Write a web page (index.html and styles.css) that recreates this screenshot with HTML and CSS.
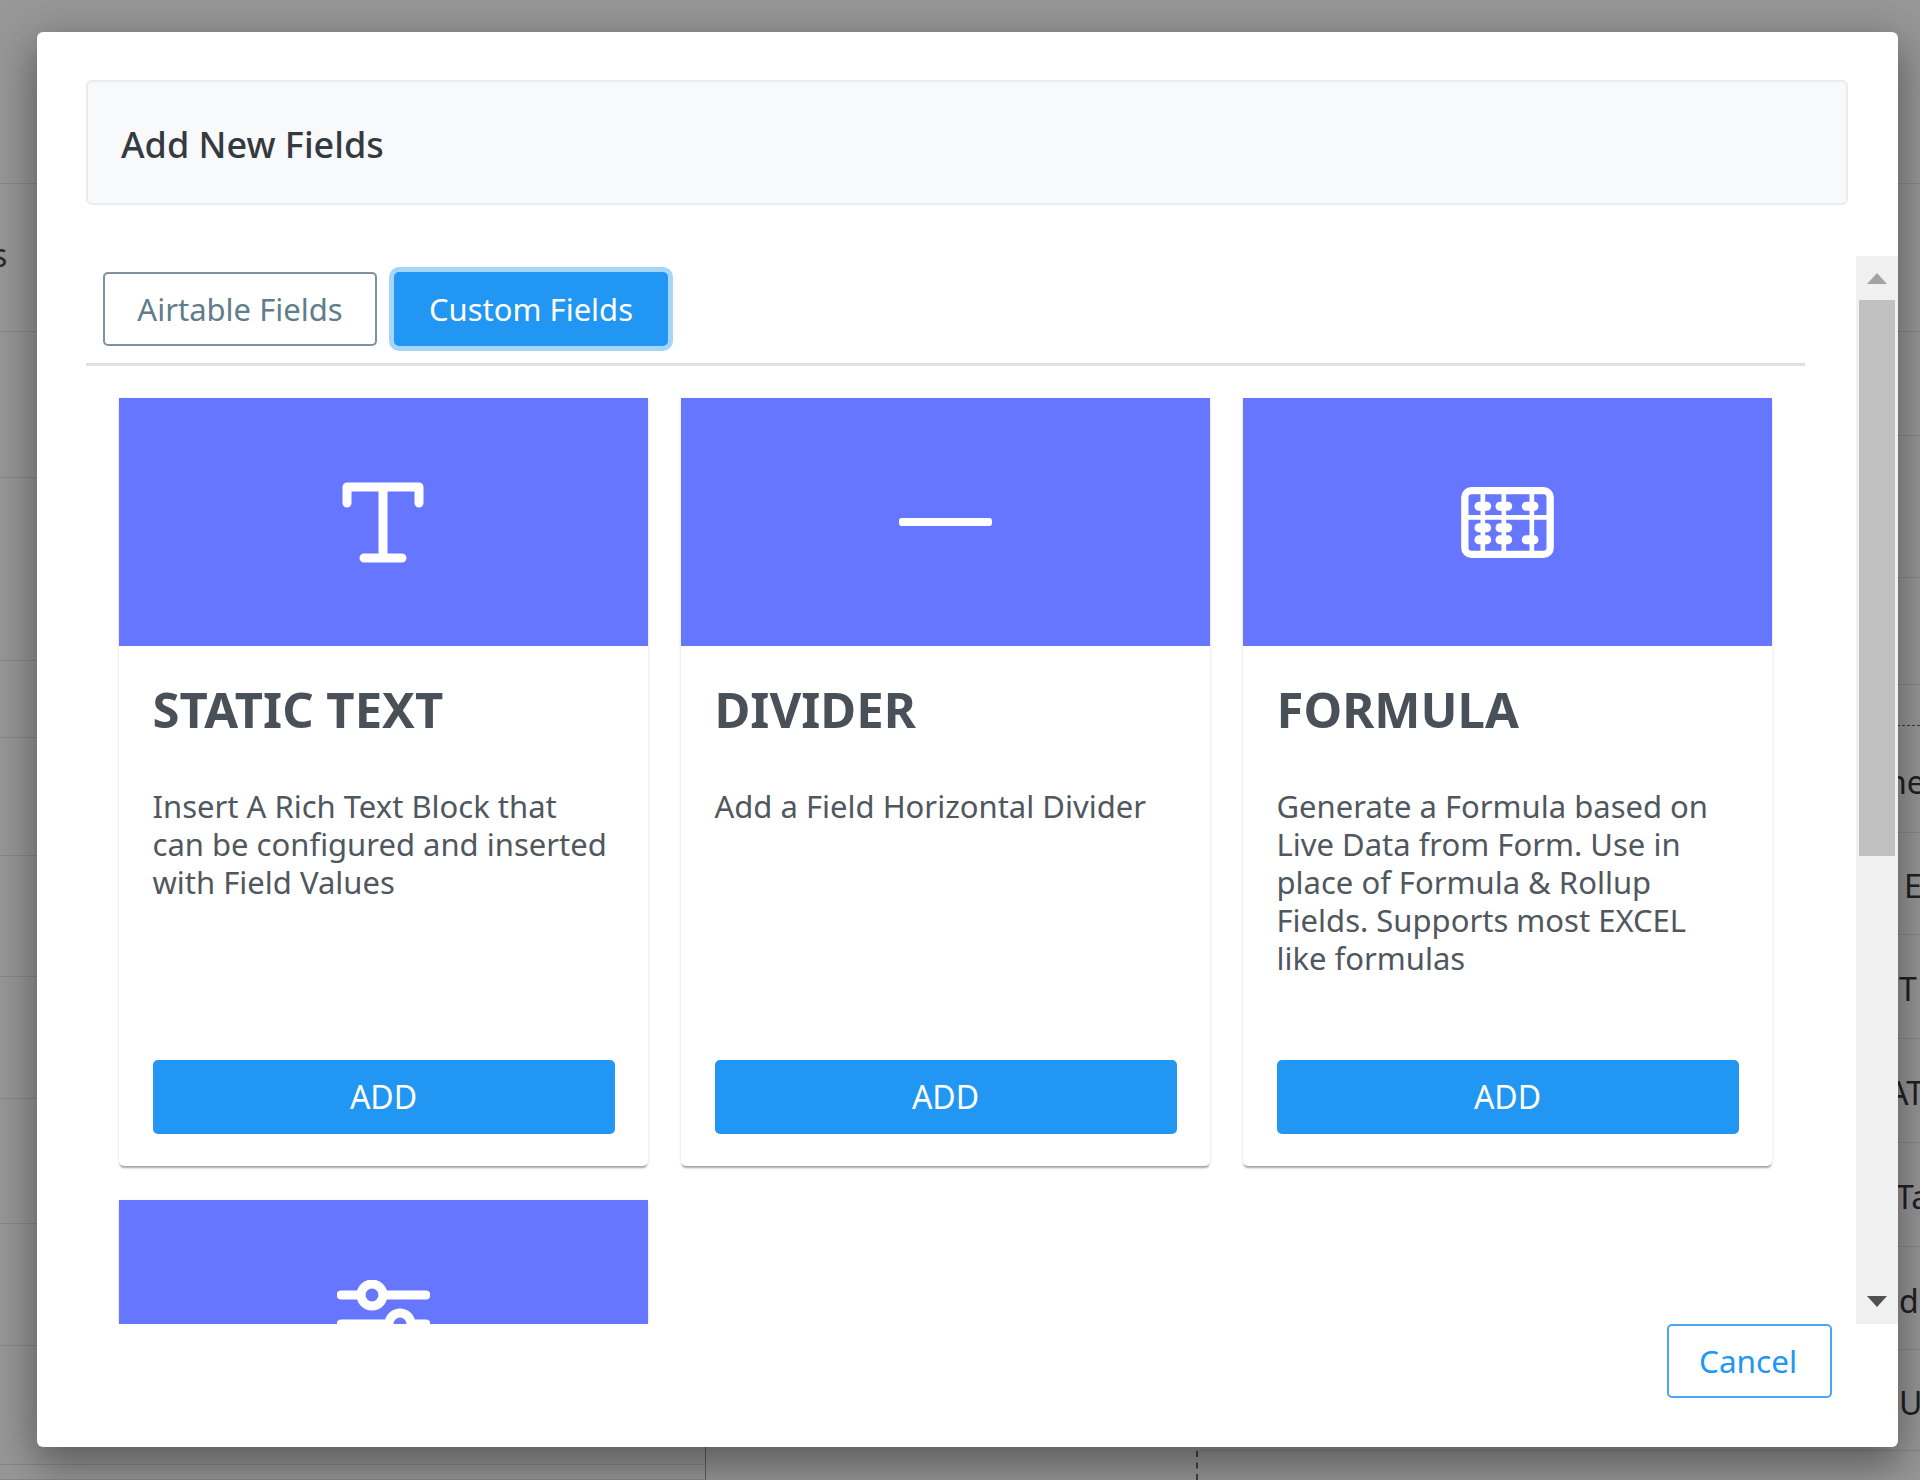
FILE: index.html
```html
<!DOCTYPE html>
<html lang="en">
<head>
    <meta charset="UTF-8">
    <title>Add New Fields</title>
    <link rel="stylesheet" href="styles.css">
</head>
<body>
    <!-- page behind the dialog -->
    <div class="page">
        <div class="col-left">
            <div class="row h184"></div>
            <div class="row h148"><span class="cut-left">s</span></div>
            <div class="row h146"></div>
            <div class="row h183"></div>
            <div class="row h77"></div>
            <div class="row h118"></div>
            <div class="row h121"></div>
            <div class="row h122"></div>
            <div class="row h125"></div>
            <div class="row h122"></div>
            <div class="row h119 edge"></div>
            <div class="row h15 edge"></div>
        </div>
        <div class="col-mid"></div>
        <div class="col-right">
            <div class="row h184"></div>
            <div class="row h148"></div>
            <div class="row h104"></div>
            <div class="row h142"></div>
            <div class="row h107"></div>
            <div class="row h41 dashed"></div>
            <div class="row h107"><span class="cell t-ne">ne</span></div>
            <div class="row h102"><span class="cell t-e">E</span></div>
            <div class="row h104"><span class="cell t-t">T</span></div>
            <div class="row h104"><span class="cell t-at">AT</span></div>
            <div class="row h104"><span class="cell t-ta">Ta</span></div>
            <div class="row h103"><span class="cell t-d">d</span></div>
            <div class="row h101"><span class="cell t-u">U</span></div>
            <div class="row h29 dash-left"></div>
        </div>
    </div>

    <div class="modal">
        <div class="modal-header"><h5>Add New Fields</h5></div>

        <div class="modal-body">
            <div class="scroll-content">
                <div class="tabs">
                    <button type="button" class="tab">Airtable Fields</button>
                    <button type="button" class="tab active">Custom Fields</button>
                </div>

                <div class="cards">
                    <div class="card">
                        <div class="card-head">
                            <svg class="icon" width="82" height="81" viewBox="0 0 82 81">
                                <path d="M5 21V5H77V21M41 5V76M22 76H60"/>
                            </svg>
                        </div>
                        <div class="card-body">
                            <h3>STATIC TEXT</h3>
                            <p>Insert A Rich Text Block that can be configured and inserted with Field Values</p>
                            <button type="button" class="add">ADD</button>
                        </div>
                    </div>

                    <div class="card">
                        <div class="card-head">
                            <svg class="icon" width="93" height="8" viewBox="0 0 93 8">
                                <path d="M4 4H89"/>
                            </svg>
                        </div>
                        <div class="card-body">
                            <h3>DIVIDER</h3>
                            <p>Add a Field Horizontal Divider</p>
                            <button type="button" class="add">ADD</button>
                        </div>
                    </div>

                    <div class="card">
                        <div class="card-head">
                            <svg class="icon abacus" width="93" height="71" viewBox="0 0 278 213">
                                <rect x="11" y="11" width="256" height="191" rx="20"/>
                                <path d="M65 10V203M128 10V203M212 10V203M10 91H268"/>
                                <g class="beads">
                                    <rect x="40" y="44" width="50" height="27" rx="13"/>
                                    <rect x="103" y="44" width="50" height="27" rx="13"/>
                                    <rect x="182" y="44" width="50" height="27" rx="13"/>
                                    <rect x="40" y="109" width="50" height="27" rx="13"/>
                                    <rect x="103" y="109" width="50" height="27" rx="13"/>
                                    <rect x="40" y="145" width="50" height="27" rx="13"/>
                                    <rect x="103" y="145" width="50" height="27" rx="13"/>
                                    <rect x="182" y="145" width="50" height="27" rx="13"/>
                                </g>
                            </svg>
                        </div>
                        <div class="card-body">
                            <h3>FORMULA</h3>
                            <p>Generate a Formula based on Live Data from Form. Use in place of Formula &amp; Rollup Fields. Supports most EXCEL like formulas</p>
                            <button type="button" class="add">ADD</button>
                        </div>
                    </div>

                    <div class="card">
                        <div class="card-head">
                            <svg class="icon" width="93" height="88" viewBox="0 0 93 88">
                                <path d="M4 15H24M46 15H89M4 44H52M74 44H89M4 73H14M36 73H89"/>
                                <circle cx="35" cy="15" r="11"/>
                                <circle cx="63" cy="44" r="11"/>
                                <circle cx="25" cy="73" r="11"/>
                            </svg>
                        </div>
                    </div>
                </div>
            </div>

            <div class="scrollbar">
                <div class="arrow up"></div>
                <div class="thumb"></div>
                <div class="arrow down"></div>
            </div>
        </div>

        <div class="modal-footer">
            <button type="button" class="cancel">Cancel</button>
        </div>
    </div>
</body>
</html>
```

FILE: styles.css
```css
* { box-sizing: border-box; }
html, body { margin: 0; height: 100%; }
body { font-family: "Noto Sans", "Open Sans", sans-serif; background: #989898; overflow: hidden; position: relative; }
button { font-family: inherit; cursor: pointer; }

/* page behind */
.page { display: flex; height: 1480px; }
.col-left { width: 706px; }
.col-mid { width: 490px; }
.col-right { flex: 1; overflow: hidden; }
.row { border-bottom: 1px solid rgba(0, 0, 0, .1); display: flex; align-items: center; white-space: nowrap; color: #1f2124; font-size: 32px; }
.h15 { height: 15px; } .h29 { height: 29px; } .h41 { height: 41px; } .h77 { height: 77px; } .h101 { height: 101px; } .h102 { height: 102px; }
.h103 { height: 103px; } .h104 { height: 104px; } .h107 { height: 107px; } .h118 { height: 118px; }
.h119 { height: 119px; } .h121 { height: 121px; } .h122 { height: 122px; } .h125 { height: 125px; }
.h142 { height: 142px; } .h146 { height: 146px; } .h148 { height: 148px; } .h183 { height: 183px; } .h184 { height: 184px; }
.dashed { border-bottom: 1px dashed #3c3c3c; }
.edge { border-right: 1px solid #5f5f5f; }
.dash-left { border-left: 2px dashed #444; border-bottom: 0; }
.cut-left { margin: -6px 0 0 -8px; font-size: 32px; color: #2b2d30; }
.cell { padding-top: 4px; }
.t-ne { padding-left: 691px; }
.t-e { padding-left: 708px; }
.t-t { padding-left: 703px; }
.t-at { padding-left: 692px; }
.t-ta { padding-left: 700px; }
.t-d { padding-left: 703px; }
.t-u { padding-left: 703px; }

/* dialog */
.modal { position: absolute; left: 37px; top: 32px; width: 1861px; height: 1415px; background: #fff; border-radius: 6px; padding-top: 48px;
    box-shadow: 0 12px 50px 4px rgba(0,0,0,.3), 0 20px 30px rgba(0,0,0,.14); }
.modal-header { margin: 0 50px 51px 49px; height: 125px; background: #f8f9fa; border: 2px solid #e9ecef; border-radius: 6px; display: flex; align-items: center; padding: 3px 0 0 33px; }
.modal-header h5 { margin: 0; font-size: 36px; font-weight: 500; color: #343a40; }

.modal-body { display: flex; height: 1068px; }
.scroll-content { flex: 1; overflow: hidden; padding: 16px 51px 0 49px; }
.tabs { display: flex; gap: 17px; padding: 0 0 17px 17px; border-bottom: 3px solid #dee2e6; }
.tab { width: 274px; height: 74px; font-size: 31px; color: #607d8b; background: #fff; border: 2px solid #7b939f; border-radius: 5px; padding: 0; }
.tab.active { color: #fff; background: #2196f3; border-color: #2196f3; box-shadow: 0 0 0 5px #a6d5fa; }

.cards { display: grid; grid-template-columns: repeat(3, 1fr); column-gap: 33px; row-gap: 34px; padding: 32px 33.5px 0 32.5px; }
.card { display: flex; flex-direction: column; height: 768px; background: #fff; border-radius: 0 0 5px 5px;
    box-shadow: 0 3px 2px -1px rgba(0,0,0,.3), 0 1px 3px 0 rgba(0,0,0,.12); }
.card-head { height: 248px; flex: none; background: #6776ff; display: flex; align-items: center; justify-content: center; }
.icon { fill: none; stroke: #fff; stroke-width: 9; stroke-linecap: round; stroke-linejoin: round; }
.abacus { stroke-width: 22; }
.abacus path { stroke-width: 14; stroke-linecap: butt; }
.beads rect { fill: #fff; stroke: none; }
.card-body { flex: 1; display: flex; flex-direction: column; padding: 33px 33px 32px 34px; }
.card-body h3 { margin: 0 0 48px; font-size: 49px; line-height: 60px; font-weight: 700; color: #495057; }
.card-body p { margin: 0; flex: 1; font-size: 31px; line-height: 38px; color: #50575e; }
.add { height: 74px; font-size: 32px; color: #fff; background: #2196f3; border: 0; border-radius: 5px; padding: 0 0 2px; }

.scrollbar { width: 42px; flex: none; background: #f0f0f0; display: flex; flex-direction: column; align-items: center; }
.arrow { flex: none; width: 0; height: 0; border-left: 10px solid transparent; border-right: 10px solid transparent; }
.arrow.up { margin: 17px 0 16px; border-bottom: 11px solid #a3a3a3; }
.thumb { width: 36px; height: 556px; background: #c1c1c1; }
.arrow.down { margin-top: auto; margin-bottom: 17px; border-top: 11px solid #505050; }

.modal-footer { display: flex; justify-content: flex-end; padding: 0 66px 0 0; }
.cancel { width: 165px; height: 74px; font-size: 31.5px; color: #2196f3; background: #fff; border: 2px solid #4ba6f1; border-radius: 5px; padding: 0 3px 2px 0; }
```
